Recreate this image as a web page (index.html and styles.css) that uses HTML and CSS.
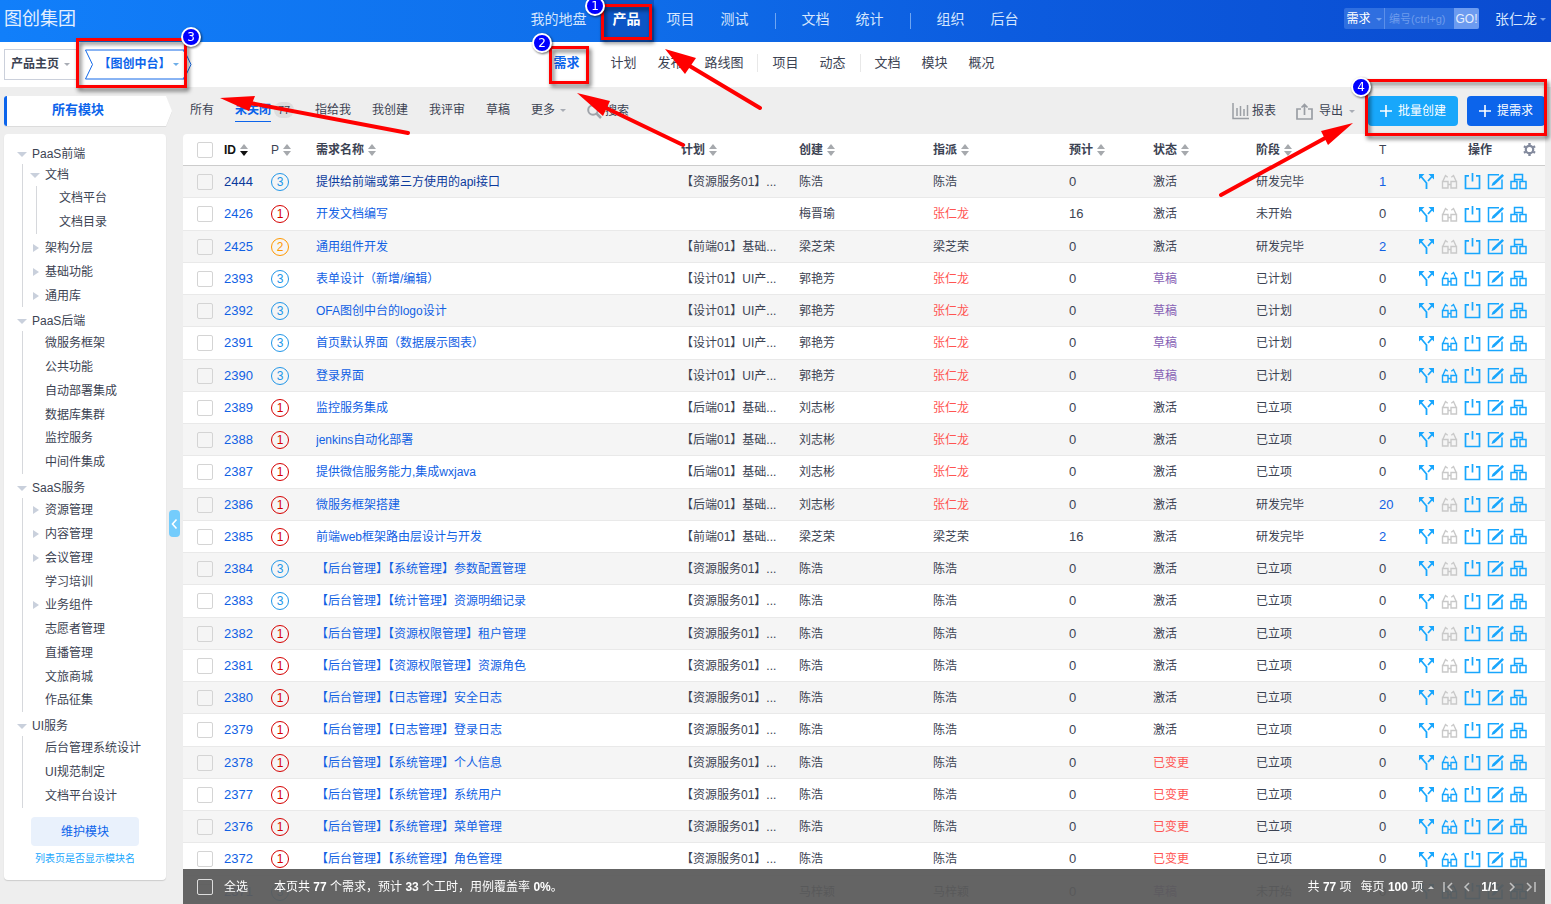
FILE: index.html
```html
<!DOCTYPE html>
<html lang="zh-CN">
<head>
<meta charset="utf-8">
<title>产品需求 - 图创集团</title>
<link rel="stylesheet" href="styles.css">
</head>
<body>
<svg class="sprite" aria-hidden="true">
  <symbol id="i-split" viewBox="0 0 17 17"><path d="M8.500 16V10L3 3.500M10 8L14 3.500" fill="none" stroke="currentColor" stroke-width="1.800"/><path d="M1 1h5.500L1 6.500zM16 1h-5.500L16 6.500z" fill="currentColor"/></symbol>
  <symbol id="i-glasses" viewBox="0 0 17 17"><path d="M1.500 8.500h5.500v6.500H1.500zM10 8.500h5.500v6.500H10zM7 11.500h3M1.500 9L4.500 2.500l2.200 1.700M15.500 9L12.500 2.500l-2.200 1.700" fill="none" stroke="currentColor" stroke-width="1.400"/></symbol>
  <symbol id="i-close" viewBox="0 0 17 17"><path d="M5 2.800H1.500V15.500h14V2.800H12M8.500 0v8.500" fill="none" stroke="currentColor" stroke-width="1.700"/></symbol>
  <symbol id="i-edit" viewBox="0 0 17 17"><path d="M12 1.800H1.500V15.500H15V6.500" fill="none" stroke="currentColor" stroke-width="1.500"/><path d="M15.200 1L17 2.800 7.500 12l-3 1 1-3z" fill="currentColor"/></symbol>
  <symbol id="i-case" viewBox="0 0 17 17"><path d="M4.500 8V1.500h8V8M1 8.500h6v7H1zM10 8.500h6v7h-6zM4 6.500h9" fill="none" stroke="currentColor" stroke-width="1.500"/></symbol>
  <symbol id="i-sort" viewBox="0 0 8 12"><path d="M0 5L4 0l4 5z" fill="#a6a9ad"/><path class="down" d="M0 7h8l-4 5z"/></symbol>
</svg>

<header class="topbar">
  <h1 class="company">图创集团</h1>
  <nav class="main-nav" aria-label="主导航">
    <a href="#">我的地盘</a><a href="#" class="active">产品</a><a href="#">项目</a><a href="#">测试</a>
    <i class="sep"></i>
    <a href="#">文档</a><a href="#">统计</a>
    <i class="sep"></i>
    <a href="#">组织</a><a href="#">后台</a>
  </nav>
  <div class="top-tools">
    <form class="quick">
      <button type="button" class="quick-type">需求<i class="caret"></i></button>
      <input type="text" placeholder="编号(ctrl+g)" aria-label="编号">
      <button type="button" class="go">GO!</button>
    </form>
    <button type="button" class="user">张仁龙<i class="caret"></i></button>
  </div>
</header>

<div class="subbar">
  <div class="crumbs">
    <button type="button" class="crumb-home">产品主页<i class="caret"></i></button>
    <button type="button" class="crumb-product">
      <svg class="crumb-shape" viewBox="0 0 107 31" aria-hidden="true"><path d="M.5 1H99l7 14.500L99 30H.5l7-14.500zM99 1v2M99 28v2" fill="none" stroke="#1268e8"/></svg>
      【图创中台】<i class="caret"></i>
    </button>
  </div>
  <nav class="sub-nav" aria-label="产品导航">
    <div class="group first"><a href="#" class="active">需求</a></div>
    <div class="group"><a href="#">计划</a><a href="#">发布</a><a href="#">路线图</a></div>
    <i class="sep"></i>
    <div class="group"><a href="#">项目</a><a href="#">动态</a></div>
    <i class="sep"></i>
    <div class="group"><a href="#">文档</a><a href="#">模块</a><a href="#">概况</a></div>
  </nav>
</div>

<div class="page">
  <aside class="side">
    <div class="side-title">
      <svg viewBox="0 0 168 30" preserveAspectRatio="none" aria-hidden="true"><path d="M3 0H162l6 15-6 15H3q-3 0-3-3V3q0-3 3-3z" fill="#fff"/><path d="M3 0v30q-3 0-3-3V3q0-3 3-3z" fill="#0c64eb"/></svg>
      <span>所有模块</span>
    </div>
    <div class="side-card">
      <ul class="tree" id="tree"></ul>
      <button type="button" class="manage">维护模块</button>
      <a href="#" class="toggle-link">列表页是否显示模块名</a>
    </div>
    <button type="button" class="collapse" aria-label="收起"><svg viewBox="0 0 11 27"><path d="M7.500 9.500l-4 4.500 4 4.500" fill="none" stroke="#fff" stroke-width="1.600"/></svg></button>
  </aside>

  <main class="content">
    <div class="toolbar">
      <div class="tabs">
        <a href="#">所有</a>
        <div class="tab-on"><a href="#" class="active">未关闭</a><span class="badge">77</span></div>
        <a href="#">指给我</a><a href="#">我创建</a><a href="#">我评审</a><a href="#">草稿</a>
        <a href="#">更多<i class="caret"></i></a>
        <a href="#" class="search"><svg width="15" height="15" viewBox="0 0 15 15"><circle cx="6" cy="6" r="4.800" fill="none" stroke="#a0a4aa" stroke-width="2"/><path d="M9.500 9.500L14 14" stroke="#a0a4aa" stroke-width="2.500"/></svg>搜索</a>
      </div>
      <div class="actions">
        <button type="button" class="tool"><svg width="17" height="17" viewBox="0 0 17 17"><path d="M1 0v15.500h16M5 13V5M8.500 13V3M12 13V6M15.500 13V2" fill="none" stroke="#9a9ea4" stroke-width="1.500"/></svg>报表</button>
        <button type="button" class="tool export"><svg width="17" height="17" viewBox="0 0 17 17"><path d="M5 6H1v10h15V6h-4M8.500 12V2M5.500 4.500l3-3 3 3" fill="none" stroke="#9a9ea4" stroke-width="1.700"/></svg>导出<i class="caret"></i></button>
        <button type="button" class="btn light"><svg width="12" height="12" viewBox="0 0 12 12"><path d="M6 0v12M0 6h12" stroke="#fff" stroke-width="1.600"/></svg>批量创建</button>
        <button type="button" class="btn"><svg width="12" height="12" viewBox="0 0 12 12"><path d="M6 0v12M0 6h12" stroke="#fff" stroke-width="1.600"/></svg>提需求</button>
      </div>
    </div>

    <div class="card">
      <table class="stories">
        <colgroup><col class="c-check"><col class="c-id"><col class="c-pri"><col><col class="c-plan"><col class="c-by"><col class="c-to"><col class="c-est"><col class="c-status"><col class="c-stage"><col class="c-t"><col class="c-ops"></colgroup>
        <thead>
          <tr>
            <th class="check"><input type="checkbox" aria-label="选择全部"></th>
            <th class="sorted">ID<svg class="sort"><use href="#i-sort"/></svg></th>
            <th class="plain">P<svg class="sort"><use href="#i-sort"/></svg></th>
            <th>需求名称<svg class="sort"><use href="#i-sort"/></svg></th>
            <th>计划<svg class="sort"><use href="#i-sort"/></svg></th>
            <th>创建<svg class="sort"><use href="#i-sort"/></svg></th>
            <th>指派<svg class="sort"><use href="#i-sort"/></svg></th>
            <th>预计<svg class="sort"><use href="#i-sort"/></svg></th>
            <th>状态<svg class="sort"><use href="#i-sort"/></svg></th>
            <th>阶段<svg class="sort"><use href="#i-sort"/></svg></th>
            <th class="plain">T</th>
            <th><div class="ops-head"><span>操作</span><svg width="13" height="13" viewBox="0 0 13 13"><circle cx="6.500" cy="6.500" r="3.700" fill="none" stroke="#838a9d" stroke-width="2.200"/><path d="M6.500 0v2M6.500 11v2M.9 3.200l1.800 1M10.300 8.800l1.800 1M.9 9.800l1.800-1M10.300 4.200l1.800-1" stroke="#838a9d" stroke-width="2.400"/></svg></div></th>
          </tr>
        </thead>
        <tbody id="rows"></tbody>
      </table>
    </div>

    <footer class="table-foot">
      <input type="checkbox" id="all"><label for="all">全选</label>
      <p class="summary">本页共 <b>77</b> 个需求，预计 <b>33</b> 个工时，用例覆盖率 <b>0%</b>。</p>
      <div class="pager">
        <span>共 <b>77</b> 项</span>
        <button type="button">每页 <b>100</b> 项<i class="caret up"></i></button>
        <button type="button" aria-label="首页"><svg width="10" height="10" viewBox="0 0 10 10"><path d="M1 0v10M9 1L5 5l4 4"/></svg></button>
        <button type="button" aria-label="上一页"><svg width="10" height="10" viewBox="0 0 10 10"><path d="M7 1L3 5l4 4"/></svg></button>
        <b>1/1</b>
        <button type="button" aria-label="下一页"><svg width="10" height="10" viewBox="0 0 10 10"><path d="M3 1l4 4-4 4"/></svg></button>
        <button type="button" aria-label="末页"><svg width="10" height="10" viewBox="0 0 10 10"><path d="M9 0v10M1 1l4 4-4 4"/></svg></button>
      </div>
    </footer>
  </main>
</div>

<svg class="notes" aria-hidden="true">
  <g class="boxes">
    <rect x="602.500" y="5.500" width="48" height="33"/>
    <rect x="550.500" y="47.500" width="37" height="35"/>
    <rect x="77.500" y="39.500" width="108" height="47"/>
    <rect x="1366.500" y="80.500" width="179" height="54"/>
  </g>
  <g class="arrows">
    <path class="shaft" d="M760 108L688 65M683 145L604 107M408 133L250 103M1221 195L1327 137"/>
    <path d="M665 49l31 9-11 16zM577 93l33 8-7 15zM220 98l35-2-6 15zM1353 123l-32 8 7 14z"/>
  </g>
  <g class="pins">
    <circle cx="595" cy="6" r="9"/><text x="595" y="10">1</text>
    <circle cx="542" cy="43" r="9"/><text x="542" y="47">2</text>
    <circle cx="191" cy="37" r="9"/><text x="191" y="41">3</text>
    <circle cx="1361" cy="87" r="9"/><text x="1361" y="91">4</text>
  </g>
</svg>
<script src="script.js"></script>
</body>
</html>
```
FILE: styles.css
```css
* { box-sizing: border-box; }
body {
  margin: 0;
  height: 100vh;
  overflow: hidden;
  background: #eee;
  color: #3c4353;
  font: 12px/20px "Liberation Sans", "Noto Sans CJK SC", sans-serif;
}
a { color: inherit; text-decoration: none; }
button { margin: 0; padding: 0; border: 0; background: none; color: inherit; font: inherit; white-space: nowrap; }
ul { margin: 0; padding: 0; list-style: none; }
.sprite { position: absolute; width: 0; height: 0; }
.caret {
  display: inline-block;
  margin-left: 5px;
  border: 3px solid transparent;
  border-top-color: #a9adb5;
  border-bottom: 0;
  vertical-align: middle;
}
.caret.up { border-top: 0; border-bottom: 3px solid #ccc; }

.topbar {
  display: grid;
  grid-template-columns: 1fr auto 1fr;
  align-items: center;
  height: 42px;
  background: linear-gradient(90deg, #117ffa, #0f6eea 40%, #0c5cdf 65%, #0a4bd0);
  color: #d5e6fd;
}
.company { margin: 0; padding: 0 4px 4px; font-size: 18px; line-height: 24px; font-weight: 400; color: #e3effe; }
.main-nav { display: flex; align-items: center; height: 42px; padding-right: 2px; font-size: 14px; }
.main-nav a { padding: 0 13px; line-height: 38px; height: 42px; }
.main-nav .active { background: #0c55c6; color: #fff; font-weight: 700; }
.main-nav .sep { width: 1px; height: 16px; margin: 0 13px; background: #6fa6f2; }
.top-tools { display: flex; justify-content: flex-end; align-items: center; padding: 0 5px 5px 0; gap: 16px; }
.quick { display: flex; height: 21px; background: #2f6fe0; border-radius: 2px; overflow: hidden; }
.quick-type { width: 41px; color: #fff; border-right: 1px solid #5c8fe9; }
.quick .caret, .user .caret { border-top-color: #77a4ee; }
.quick input { width: 69px; padding: 0 4px; border: 0; background: none; color: #fff; font: inherit; font-size: 11px; }
.quick input::placeholder { color: #6d9bec; opacity: 1; }
.go { width: 25px; background: #6c9bf0; color: #e6effd; }
.user { font-size: 14px; }
.user .caret { margin-left: 3px; }

.subbar {
  display: grid;
  grid-template-columns: 1fr auto 1fr;
  align-items: center;
  height: 45px;
  background: #fff;
}
.crumbs { display: flex; gap: 9px; padding-left: 4px; font-weight: 700; }
.crumbs button { padding-bottom: 2px; }
.crumb-home { height: 31px; padding: 0 6px; border: 1px solid #cbd0db; border-right: 0; }
.crumb-product { position: relative; width: 107px; height: 31px; color: #0c64eb; }
.crumb-product .caret { border-top-color: #6eaee8; margin-left: 2px; }
.crumb-shape { position: absolute; inset: 0; width: 107px; height: 31px; }
.sub-nav { display: flex; align-items: center; padding: 0 3px 3px 0; font-size: 13px; }
.sub-nav .group { display: flex; gap: 21px; }
.sub-nav .first { margin-right: 31px; }
.sub-nav .active { color: #0c64eb; font-weight: 700; }
.sub-nav .sep { width: 1px; height: 18px; margin: 0 14px; background: #e8e8e8; }

.page { display: flex; gap: 17px; padding: 9px 6px 0 4px; }
.side { position: relative; flex: none; width: 162px; }
.side-title { position: relative; width: 168px; height: 30px; margin-bottom: 8px; text-align: center; font-size: 13px; font-weight: 700; line-height: 27px; color: #0c64eb; padding-right: 20px; }
.side-title svg { position: absolute; inset: 0; width: 100%; height: 100%; filter: drop-shadow(0 1px 0 #dcdcdc); }
.side-title span { position: relative; }
.side-card { padding: 10px 0 11px; background: #fff; border-radius: 4px; box-shadow: 0 1px 1px #ccc; }
.tree .row { display: flex; align-items: center; height: 24px; padding-left: 13px; }
.tree .parent > .row { height: 20px; }
.tree .parent .parent > .row { height: 22px; }
.tree .row::before { content: ""; width: 9px; margin-right: 5px; flex: none; }
.tree .parent > .row::before { border: 5px solid transparent; border-top-color: #c9d0dc; border-bottom: 0; width: 0; margin-left: -1px; }
.tree .closed > .row::before { border: 4px solid transparent; border-left: 6px solid #c9d0dc; border-right: 0; width: 0; margin-left: 2px; margin-right: 6px; }
.tree ul { margin-left: 18px; margin-bottom: 4px; border-left: 1px solid #d6d8dc; }
.tree ul .row { padding-left: 8px; }
.tree ul ul { margin-left: 13px; margin-bottom: 2px; }
.tree ul li:nth-child(4n) > .row { height: 23px; }
.tree > .parent > .row { padding-left: 14px; }
.manage { display: block; width: 108px; height: 29px; margin: 9px auto 3px 27px; border-radius: 4px; background: #e9f1fc; color: #0c64eb; }
.toggle-link { display: block; text-align: center; font-size: 10px; color: #18a6fd; }
.collapse { position: absolute; left: 165px; top: 414px; width: 11px; height: 27px; border-radius: 4px; background: #74ccfc; }
.collapse svg { display: block; }

.content { flex: 1; min-width: 0; }
.toolbar { display: flex; justify-content: space-between; height: 30px; margin-bottom: 8px; }
.tabs { display: flex; gap: 21px; padding-left: 7px; line-height: 29px; white-space: nowrap; }
.tab-on { display: flex; gap: 3px; align-items: flex-start; }
.tabs .active { height: 26px; color: #0c64eb; font-weight: 700; border-bottom: 1px solid #0c64eb; }
.badge { width: 20px; height: 16px; margin-top: 6px; border-radius: 8px; background: #ddd; font-size: 11px; line-height: 16px; text-align: center; }
.tabs .search { display: flex; align-items: center; gap: 3px; }
.actions { display: flex; align-items: center; gap: 9px; }
.tool { display: flex; align-items: center; gap: 3px; margin-right: 11px; }
.tool.export { gap: 6px; margin-right: 4px; }
.tool .caret { margin-left: 0; }
.btn { display: flex; align-items: center; justify-content: center; gap: 6px; height: 30px; padding: 0 12px; border-radius: 4px; background: #0c64eb; color: #fff; }
.btn.light { background: #18a7fb; }

.card { background: #fff; border-radius: 4px 4px 0 0; }
.stories { width: 100%; border-collapse: separate; border-spacing: 0; table-layout: fixed; }
.c-check { width: 41px; } .c-id { width: 47px; } .c-pri { width: 45px; } .c-plan { width: 118px; }
.c-by { width: 134px; } .c-to { width: 136px; } .c-est { width: 84px; } .c-status { width: 103px; }
.c-stage { width: 123px; } .c-t { width: 39px; } .c-ops { width: 127px; }
.stories th { height: 32px; padding: 0; text-align: left; border-bottom: 1px solid #ccc; white-space: nowrap; }
.stories .plain { font-weight: 400; }
.stories td { height: 32px; padding: 0; line-height: 20px; white-space: nowrap; overflow: hidden; border-bottom: 1px solid #e9e9e9; }
.stories tbody tr:nth-child(4n+2) td { height: 33px; }
.stories tbody tr:nth-child(odd) { background: #f5f5f5; }
.stories .check { padding-left: 14px; }
.sort { width: 8px; height: 12px; margin-left: 4px; vertical-align: -2px; fill: #a6a9ad; }
.sorted { color: #111; }
.sorted .sort { fill: #111; }
input[type="checkbox"] { appearance: none; display: block; width: 16px; height: 16px; margin: 0; border: 1px solid #d4d4d4; border-radius: 2px; background: transparent; }
.stories .num { font-size: 13px; }
.stories a { color: #1161e4; }
.stories tr:first-child td:nth-child(-n+4) a { color: #0b3a9c; }
.pri { display: block; width: 18px; height: 18px; border: 1px solid; border-radius: 50%; line-height: 16px; text-align: center; font-size: 12px; }
.p1 { color: #d50000; } .p2 { color: #ff9800; } .p3 { color: #2196e8; }
.me { color: #ff5452; } .draft { color: #8660b4; } .changed { color: #ff5452; }
.ops { display: flex; gap: 6px; color: #18a6fd; }
.ops button { width: 17px; height: 17px; }
.ops svg { display: block; width: 17px; height: 17px; }
.ops button:disabled { color: #c9c9c9; }
.ops-head { display: flex; justify-content: space-between; align-items: center; padding: 0 9px 0 50px; }

.table-foot {
  position: fixed;
  left: 183px; right: 6px; bottom: 0;
  display: flex;
  align-items: center;
  height: 35px;
  padding: 0 9px 0 14px;
  background: rgba(90, 90, 90, .94);
  color: #fff;
}
.table-foot input { border-color: #ddd; }
.table-foot label { margin: 0 26px 0 11px; }
.summary { margin: 0; }
.pager { display: flex; align-items: center; gap: 9px; margin-left: auto; }
.pager svg { display: block; fill: none; stroke: #c2c2c2; stroke-width: 1.500; }

.notes { position: absolute; left: 0; top: 0; width: 100%; height: 220px; pointer-events: none; }
.boxes { fill: none; stroke: #f00; stroke-width: 3; filter: drop-shadow(2px 3px 2px rgba(0, 0, 0, .6)); }
.arrows { fill: #f00; }
.shaft { stroke: #f00; stroke-width: 4; stroke-linecap: round; }
.pins { filter: drop-shadow(1px 1px 1px rgba(0, 0, 0, .6)); }
.pins circle { fill: #00f; stroke: #fff; stroke-width: 2; }
.pins text { fill: #fff; font: 12px "DejaVu Sans", sans-serif; text-anchor: middle; }
```
FILE: script.js
```javascript
// Module tree: a string is a leaf, "+name" is a collapsed branch, [name, children] is an open branch.
const modules = [
  ["PaaS前端", [["文档", ["文档平台", "文档目录"]], "+架构分层", "+基础功能", "+通用库"]],
  ["PaaS后端", ["微服务框架", "公共功能", "自动部署集成", "数据库集群", "监控服务", "中间件集成"]],
  ["SaaS服务", ["+资源管理", "+内容管理", "+会议管理", "学习培训", "+业务组件", "志愿者管理", "直播管理", "文旅商城", "作品征集"]],
  ["UI服务", ["后台管理系统设计", "UI规范制定", "文档平台设计"]]
];
const branch = node => {
  if (Array.isArray(node)) {
    return `<li class="parent"><a href="#" class="row">${node[0]}</a><ul>${node[1].map(branch).join("")}</ul></li>`;
  }
  const closed = node[0] === "+";
  return `<li${closed ? ' class="closed"' : ""}><a href="#" class="row">${closed ? node.slice(1) : node}</a></li>`;
};
document.getElementById("tree").innerHTML = modules.map(branch).join("");

const R = "【资源服务01】...", F = "【前端01】基础...", D = "【设计01】UI产...", B = "【后端01】基础...";
const me = "张仁龙";
// id, priority, title, plan, creator, assignee, estimate, status, stage, tasks
const stories = [
  [2444, 3, "提供给前端或第三方使用的api接口", R, "陈浩", "陈浩", 0, "激活", "研发完毕", 1],
  [2426, 1, "开发文档编写", "", "梅晋瑜", me, 16, "激活", "未开始", 0],
  [2425, 2, "通用组件开发", F, "梁芝荣", "梁芝荣", 0, "激活", "研发完毕", 2],
  [2393, 3, "表单设计（新增/编辑）", D, "郭艳芳", me, 0, "草稿", "已计划", 0],
  [2392, 3, "OFA图创中台的logo设计", D, "郭艳芳", me, 0, "草稿", "已计划", 0],
  [2391, 3, "首页默认界面（数据展示图表）", D, "郭艳芳", me, 0, "草稿", "已计划", 0],
  [2390, 3, "登录界面", D, "郭艳芳", me, 0, "草稿", "已计划", 0],
  [2389, 1, "监控服务集成", B, "刘志彬", me, 0, "激活", "已立项", 0],
  [2388, 1, "jenkins自动化部署", B, "刘志彬", me, 0, "激活", "已立项", 0],
  [2387, 1, "提供微信服务能力,集成wxjava", B, "刘志彬", me, 0, "激活", "已立项", 0],
  [2386, 1, "微服务框架搭建", B, "刘志彬", me, 0, "激活", "研发完毕", 20],
  [2385, 1, "前端web框架路由层设计与开发", F, "梁芝荣", "梁芝荣", 16, "激活", "研发完毕", 2],
  [2384, 3, "【后台管理】【系统管理】参数配置管理", R, "陈浩", "陈浩", 0, "激活", "已立项", 0],
  [2383, 3, "【后台管理】【统计管理】资源明细记录", R, "陈浩", "陈浩", 0, "激活", "已立项", 0],
  [2382, 1, "【后台管理】【资源权限管理】租户管理", R, "陈浩", "陈浩", 0, "激活", "已立项", 0],
  [2381, 1, "【后台管理】【资源权限管理】资源角色", R, "陈浩", "陈浩", 0, "激活", "已立项", 0],
  [2380, 1, "【后台管理】【日志管理】安全日志", R, "陈浩", "陈浩", 0, "激活", "已立项", 0],
  [2379, 1, "【后台管理】【日志管理】登录日志", R, "陈浩", "陈浩", 0, "激活", "已立项", 0],
  [2378, 1, "【后台管理】【系统管理】个人信息", R, "陈浩", "陈浩", 0, "已变更", "已立项", 0],
  [2377, 1, "【后台管理】【系统管理】系统用户", R, "陈浩", "陈浩", 0, "已变更", "已立项", 0],
  [2376, 1, "【后台管理】【系统管理】菜单管理", R, "陈浩", "陈浩", 0, "已变更", "已立项", 0],
  [2372, 1, "【后台管理】【系统管理】角色管理", R, "陈浩", "陈浩", 0, "已变更", "已立项", 0],
  [2371, 3, "", "", "马梓颖", "马梓颖", 0, "草稿", "未开始", 0]
];
const statusClass = { "草稿": "draft", "已变更": "changed", "激活": "" };
const op = (icon, label, off) =>
  `<button type="button" aria-label="${label}"${off ? " disabled" : ""}><svg><use href="#i-${icon}"/></svg></button>`;
document.getElementById("rows").innerHTML = stories.map(
  ([id, pri, title, plan, by, to, est, status, stage, tasks]) => `<tr>
  <td class="check"><input type="checkbox" aria-label="选择 ${id}"></td>
  <td class="num"><a href="#">${id}</a></td>
  <td><span class="pri p${pri}">${pri}</span></td>
  <td><a href="#">${title}</a></td>
  <td>${plan}</td>
  <td>${by}</td>
  <td${to === me ? ' class="me"' : ""}>${to}</td>
  <td class="num">${est}</td>
  <td class="${statusClass[status]}">${status}</td>
  <td>${stage}</td>
  <td class="num">${tasks ? `<a href="#">${tasks}</a>` : 0}</td>
  <td><div class="ops">${op("split", "变更")}${op("glasses", "评审", status === "激活")}${op("close", "关闭")}${op("edit", "编辑")}${op("case", "用例")}</div></td>
</tr>`).join("");
```
